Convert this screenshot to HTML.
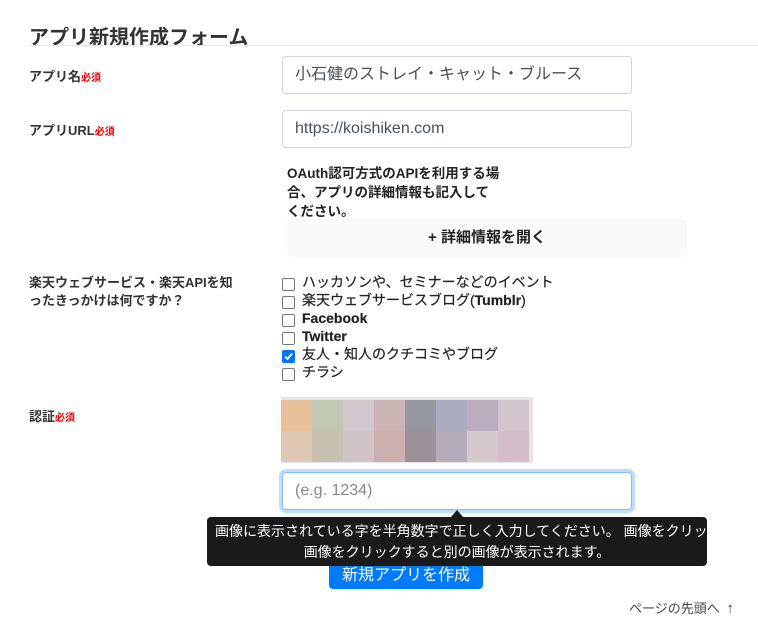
<!DOCTYPE html>
<html><head><meta charset="utf-8"><style>
*{box-sizing:border-box;margin:0;padding:0}
body{width:758px;height:636px;overflow:hidden;background:#fff;font-family:"Liberation Sans","Noto Sans CJK JP",sans-serif;color:#212529;position:relative}
.a{position:absolute;white-space:nowrap}
h2{position:absolute;left:29px;top:21px;font-size:20px;font-weight:bold;color:#333}
.hr{position:absolute;left:29px;top:45px;width:729px;height:1px;background:#e4e6e8}
.lbl{font-size:13px;font-weight:bold;color:#333}
.req{font-size:10px;color:#e00;font-weight:bold}
.inp{position:absolute;left:282px;width:350px;height:38px;border:1px solid #ced4da;border-radius:4px;font-size:16px;color:#495057;padding:0 12px;line-height:36px}
.cb{position:absolute;left:282px;width:13px;height:13px;border:1px solid #767676;border-radius:2px;background:#fff}
.cl{position:absolute;left:302px;font-size:14px;color:#222;white-space:nowrap;line-height:18px;-webkit-text-stroke:0.2px #222}
</style></head><body>
<h2>アプリ新規作成フォーム</h2>
<div class="hr"></div>
<div class="a lbl" style="left:29px;top:66px">アプリ名<span class="req">必須</span></div>
<div class="inp" style="top:56px">小石健のストレイ・キャット・ブルース</div>
<div class="a lbl" style="left:29px;top:120px">アプリURL<span class="req">必須</span></div>
<div class="inp" style="top:110px">https://koishiken.com</div>
<div class="a" style="left:287px;top:164px;font-size:13.5px;font-weight:bold;line-height:19px;color:#222">OAuth認可方式のAPIを利用する場<br>合、アプリの詳細情報も記入して<br>ください。</div>
<div class="a" style="left:287px;top:219px;width:400px;height:38px;background:#f8f9fa;border-radius:4px;text-align:center;line-height:38px;font-size:15px;font-weight:bold;color:#222">+ 詳細情報を開く</div>
<div class="a lbl" style="left:29px;top:274px;line-height:18px">楽天ウェブサービス・楽天APIを知<br>ったきっかけは何ですか？</div>
<div class="cb" style="top:278px"></div><div class="cl" style="top:273px">ハッカソンや、セミナーなどのイベント</div>
<div class="cb" style="top:296px"></div><div class="cl" style="top:291px">楽天ウェブサービスブログ(<b>Tumblr</b>)</div>
<div class="cb" style="top:314px"></div><div class="cl" style="top:309px;font-weight:bold">Facebook</div>
<div class="cb" style="top:332px"></div><div class="cl" style="top:327px;font-weight:bold">Twitter</div>
<div class="cb" style="top:350px;background:#0075ff;border-color:#0075ff"><svg width="11" height="11" viewBox="0 0 11 11" style="position:absolute;left:0;top:0"><path d="M2 5.5L4.5 8L9 2.5" stroke="#fff" stroke-width="1.8" fill="none"/></svg></div><div class="cl" style="top:345px">友人・知人のクチコミやブログ</div>
<div class="cb" style="top:368px"></div><div class="cl" style="top:363px">チラシ</div>
<div class="a lbl" style="left:29px;top:406px">認証<span class="req">必須</span></div>
<div class="a" style="left:281px;top:397px;width:252px;height:66px;background:#e8e4e6">
<div style="display:grid;grid-template-columns:repeat(8,31px);grid-template-rows:31px 31px;position:absolute;left:0;top:3px">
<div style="background:#e8c09a"></div><div style="background:#c0c8b4"></div><div style="background:#d0c8cc"></div><div style="background:#ccb4b4"></div><div style="background:#9496a0"></div><div style="background:#acacc0"></div><div style="background:#bcacc0"></div><div style="background:#d4c4d0"></div>
<div style="background:#dcc8b4"></div><div style="background:#c8c0b0"></div><div style="background:#d0c4c8"></div><div style="background:#ccb0b0"></div><div style="background:#9a9298"></div><div style="background:#b4acb8"></div><div style="background:#d4c8cc"></div><div style="background:#d4bcc8"></div>
</div></div>
<div class="inp" style="top:472px;border-color:#80bdff;box-shadow:0 0 0 3px rgba(0,123,255,.25);color:#888">(e.g. 1234)</div>
<div class="a" style="left:329px;top:530px;width:154px;height:59px;background:#007bff;border-radius:4px;color:#fff;font-size:16px;text-align:center;padding-top:31px">新規アプリを作成</div>
<div class="a" style="left:451px;top:510px;width:0;height:0;border-left:6px solid transparent;border-right:6px solid transparent;border-bottom:7px solid #1a1a1a"></div>
<div class="a" style="left:207px;top:517px;width:500px;height:49px;background:#1a1a1a;border-radius:4px;color:#fff;font-size:14px;line-height:21px;overflow:hidden">
<div style="position:absolute;left:8px;top:4px;white-space:nowrap">画像に表示されている字を半角数字で正しく入力してください。 画像をクリックすると</div>
<div style="position:absolute;left:0;top:25px;width:500px;text-align:center">画像をクリックすると別の画像が表示されます。</div>
</div>
<div class="a" style="left:629px;top:598px;font-size:13px;color:#444">ページの先頭へ <span style="font-weight:bold;font-size:15px;margin-left:3px">↑</span></div>
</body></html>
